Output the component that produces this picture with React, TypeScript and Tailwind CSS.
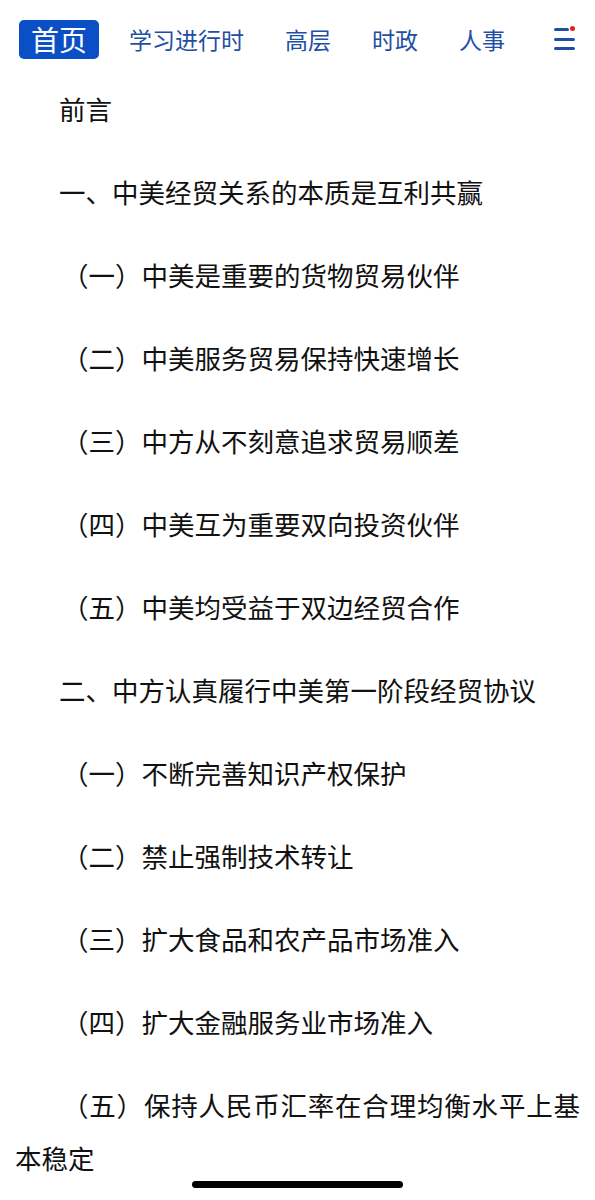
import React from "react";

const items: { text: string; level: number }[] = [
  { text: "前言", level: 0 },
  { text: "一、中美经贸关系的本质是互利共赢", level: 0 },
  { text: "（一）中美是重要的货物贸易伙伴", level: 1 },
  { text: "（二）中美服务贸易保持快速增长", level: 1 },
  { text: "（三）中方从不刻意追求贸易顺差", level: 1 },
  { text: "（四）中美互为重要双向投资伙伴", level: 1 },
  { text: "（五）中美均受益于双边经贸合作", level: 1 },
  { text: "二、中方认真履行中美第一阶段经贸协议", level: 0 },
  { text: "（一）不断完善知识产权保护", level: 1 },
  { text: "（二）禁止强制技术转让", level: 1 },
  { text: "（三）扩大食品和农产品市场准入", level: 1 },
  { text: "（四）扩大金融服务业市场准入", level: 1 },
  { text: "（五）保持人民币汇率在合理均衡水平上基本稳定", level: 1 },
];

export default function App() {
  return (
    <div
      className="relative w-[595px] h-[1200px] overflow-hidden bg-white"
      style={{ fontFamily: '"Noto Sans CJK SC", "Noto Sans", sans-serif' }}
    >
      <nav className="flex items-center h-[78px] pl-[19px] pr-[20px]">
        <div className="flex items-center h-[39px] px-[12px] rounded-[5px] bg-[#0b4fc6] text-white text-[28px] leading-none">
          首页
        </div>
        <div className="flex items-center text-[#1f4fa3] text-[23px] leading-none ml-[30px] gap-[41px]">
          <span>学习进行时</span>
          <span>高层</span>
          <span>时政</span>
          <span>人事</span>
        </div>
        <div className="ml-auto relative w-[21px] h-[22px] flex flex-col justify-between">
          <div className="h-[3px] w-[15px] bg-[#1f4fa3] rounded-full" />
          <div className="h-[3px] w-[21px] bg-[#1f4fa3] rounded-full" />
          <div className="h-[3px] w-[21px] bg-[#1f4fa3] rounded-full" />
          <div className="absolute right-[0px] top-[-2px] w-[5px] h-[5px] rounded-full bg-[#e2231a]" />
        </div>
      </nav>
      <div className="px-[15px] pt-[4px] text-[26.5px] leading-[53px] text-[#111111] text-justify">
        {items.map((it, i) => (
          <p
            key={i}
            className={
              it.level === 0
                ? "mb-[30px] indent-[44px]"
                : "mb-[30px] indent-[47px]"
            }
          >
            {it.text}
          </p>
        ))}
      </div>
      <div className="absolute left-[192px] bottom-[12px] w-[211px] h-[7px] rounded-full bg-black" />
    </div>
  );
}
